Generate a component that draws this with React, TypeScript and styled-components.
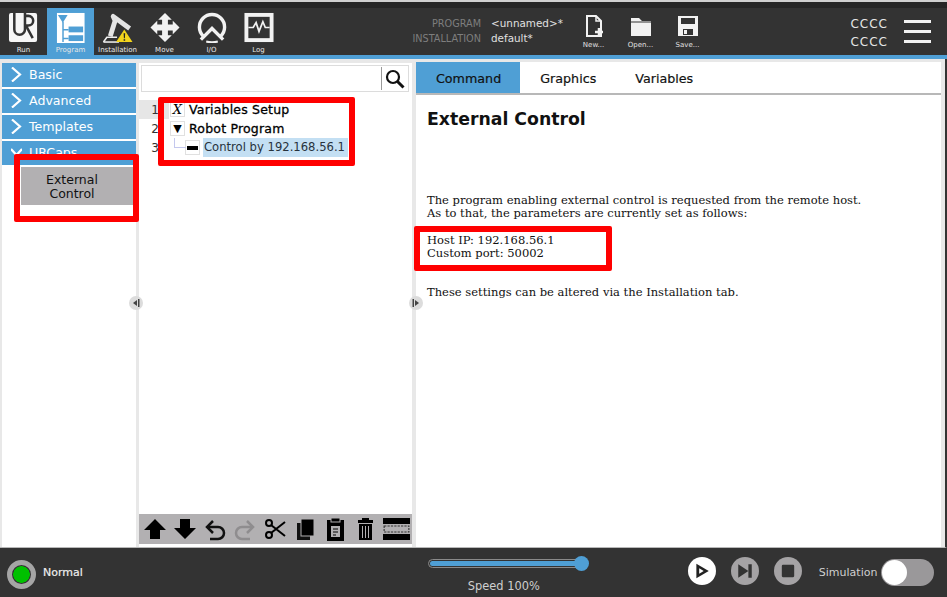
import React from 'react';
import styled, { createGlobalStyle } from 'styled-components';

const GlobalStyle = createGlobalStyle`
    html, body { margin: 0; padding: 0; background: #fff; }
    body { font-family: "DejaVu Sans", sans-serif; }
`;

const Page = styled.div`
    position: relative;
    width: 947px;
    height: 597px;
    overflow: hidden;
    display: flex;
    flex-direction: column;
    background: #e8e8e8;
`;

const TopBar = styled.header`
    height: 55px;
    box-sizing: border-box;
    flex: none;
    display: flex;
    align-items: stretch;
    background: #333333;
    border-top: 2px solid #d0d0d0;
    box-shadow: inset 0 6px 0 #262626;
    padding-top: 6px;
    padding-right: 2px;
`;

const NavItem = styled.div<{ $active?: boolean }>`
    width: 47px;
    display: flex;
    flex-direction: column;
    align-items: center;
    padding-top: 4px;
    box-sizing: border-box;
    background: ${p => (p.$active ? '#4f9fd5' : 'transparent')};
    color: #e6e6e6;
    font-size: 7px;
    svg { display: block; height: 32px; width: 34px; }
    span { margin-top: 3px; line-height: 9px; white-space: nowrap; }
`;

const FileInfo = styled.div`
    margin-left: 130px;
    width: 152px;
    padding-top: 8px;
    display: grid;
    grid-template-columns: 69px 1fr;
    column-gap: 10px;
    grid-auto-rows: 15px;
    line-height: 15px;
`;

const FileLabel = styled.span`
    color: #7e7e7e;
    text-align: right;
    font-size: 9.7px;
`;

const FileValue = styled.span`
    color: #e0e0e0;
    white-space: nowrap;
    font-size: 10.4px;
`;

const FileButtons = styled.div`
    margin-left: 6px;
    display: flex;
`;

const FileButton = styled.div`
    width: 47px;
    display: flex;
    flex-direction: column;
    align-items: center;
    padding-top: 7px;
    color: #e0e0e0;
    font-size: 7px;
    svg { display: block; width: 20px; height: 22px; }
    span { margin-top: 3px; line-height: 10px; }
`;

const Counters = styled.div`
    margin-left: auto;
    margin-right: 16px;
    padding-top: 7px;
    font-size: 12px;
    letter-spacing: 1px;
    line-height: 18px;
    color: #e6e6e6;
`;

const Hamburger = styled.div`
    width: 27px;
    margin-right: 14px;
    padding-top: 12px;
    display: flex;
    flex-direction: column;
    gap: 7px;
    i { display: block; height: 3px; background: #f2f2f2; }
`;

const BlueLine = styled.div`
    height: 4px;
    flex: none;
    background: #4f9fd5;
`;

const Main = styled.main`
    flex: 1;
    min-height: 0;
    display: flex;
    padding: 3px 4px 0 2px;
    border-bottom: 1px solid #b8b8b8;
    border-right: 2px solid #333;
    gap: 3px;
`;

const Sidebar = styled.nav`
    width: 134px;
    flex: none;
    background: #fff;
    margin-top: 1px;
    position: relative;
`;

const Group = styled.div`
    height: 24px;
    box-sizing: border-box;
    padding: 0 0 2px 9px;
    margin-bottom: 2px;
    display: flex;
    align-items: center;
    gap: 7px;
    background: #4f9fd5;
    color: #fff;
    font-size: 12.6px;
    svg { width: 11px; height: 15px; flex: none; }
`;

const SideChild = styled.div`
    margin: 2px 3px 0 19px;
    height: 38px;
    background: #b2b0b2;
    color: #111;
    font-size: 12.5px;
    line-height: 14px;
    text-align: center;
    display: flex;
    align-items: center;
    justify-content: center;
    box-sizing: border-box;
    padding: 2px 10px 0 0;
`;

const TreePanel = styled.section`
    width: 273px;
    flex: none;
    display: flex;
    flex-direction: column;
    background: #fff;
    margin-top: 1px;
    padding-bottom: 3px;
`;

const SearchBox = styled.div`
    height: 27px;
    margin: 2px 3px 0 2px;
    flex: none;
    box-sizing: border-box;
    border: 1px solid #dcdcdc;
    background: #fff;
    display: flex;
    justify-content: flex-end;
    align-items: center;
`;

const SearchButton = styled.div`
    width: 27px;
    height: 23px;
    box-sizing: border-box;
    border-left: 1px solid #999;
    display: flex;
    align-items: center;
    justify-content: center;
    svg { width: 20px; height: 20px; }
`;

const Tree = styled.div`
    flex: 1;
    padding-top: 8px;
`;

const TreeRow = styled.div<{ $current?: boolean }>`
    height: 19px;
    display: flex;
    align-items: center;
    background: ${p => (p.$current ? 'linear-gradient(90deg, #e6e6e6 0 30px, transparent 30px)' : 'transparent')};
`;

const LineNumber = styled.span`
    width: 20px;
    padding-right: 11px;
    text-align: right;
    font-size: 12px;
    color: #333;
    flex: none;
`;

const Toggle = styled.span<{ $indent?: number }>`
    width: 15px;
    height: 15px;
    flex: none;
    margin-left: ${p => p.$indent ?? 0}px;
    box-sizing: border-box;
    border: 1px solid #e0e0e0;
    display: flex;
    align-items: center;
    justify-content: center;
    color: #000;
    font-size: 11px;
    line-height: 1;
`;

const VariableMark = styled.em`
    font-family: "DejaVu Serif", serif;
    font-size: 13px;
    font-style: italic;
`;

const NodeText = styled.span<{ $selected?: boolean }>`
    margin-left: ${p => (p.$selected ? 3 : 4)}px;
    padding: 0 3px 0 ${p => (p.$selected ? 1 : 0)}px;
    font-size: ${p => (p.$selected ? 11.6 : 12.5)}px;
    line-height: 19px;
    letter-spacing: ${p => (p.$selected ? 0 : 0.2)}px;
    -webkit-text-stroke: ${p => (p.$selected ? 0 : 0.3)}px #000;
    white-space: nowrap;
    color: ${p => (p.$selected ? '#27323c' : '#000')};
    background: ${p => (p.$selected ? '#c3dff3' : 'transparent')};
`;

const Branch = styled.span`
    position: absolute;
    left: 174px;
    top: 138px;
    width: 11px;
    height: 9px;
    border-left: 1px solid #c4c8ee;
    border-bottom: 1px solid #c4c8ee;
`;

const TreeToolbar = styled.div`
    height: 30px;
    flex: none;
    background: #b2b0b2;
    display: flex;
    align-items: center;
    justify-content: space-between;
    padding: 0 2px 0 4px;
    svg { display: block; width: 24px; height: 24px; }
    svg:last-child { width: 27px; }
`;

const CommandPanel = styled.section`
    flex: 1;
    display: flex;
    flex-direction: column;
    background: #fff;
    margin-left: 1px;
`;

const Tabs = styled.div`
    height: 31px;
    flex: none;
    display: flex;
    border-bottom: 2px solid #b8b8b8;
`;

const Tab = styled.div<{ $active?: boolean }>`
    padding: 2px 19px 0 20px;
    display: flex;
    align-items: center;
    font-size: 12.7px;
    color: #111;
    background: ${p => (p.$active ? '#4f9fd5' : 'transparent')};
    -webkit-text-stroke: 0.2px #111;
`;

const Content = styled.div`
    padding: 13px 11px;
    font-family: "DejaVu Serif", serif;
    font-size: 11.52px;
    line-height: 13px;
    color: #111;
`;

const Title = styled.h1`
    margin: 0 0 64px;
    font-family: "DejaVu Sans", sans-serif;
    font-size: 17.3px;
    line-height: 22px;
    font-weight: 700;
    color: #111;
`;

const Para = styled.p`
    margin: 0 0 14px;
    white-space: pre-line;
`;

const ParaGap = styled(Para)`
    margin-bottom: 26px;
`;

const Footer = styled.footer`
    height: 49px;
    flex: none;
    display: flex;
    align-items: center;
    background: #333333;
    position: relative;
`;

const StatusLamp = styled.div`
    width: 19px;
    height: 19px;
    margin: 3px 0 0 7px;
    border: 5px solid #a5a5a5;
    border-radius: 50%;
    background: radial-gradient(circle, #00c000 0 8px, #333 8.500px);
    flex: none;
`;

const StatusText = styled.span`
    margin-left: 7px;
    font-size: 11px;
    color: #eee;
    -webkit-text-stroke: 0.2px #eee;
`;

const SpeedControl = styled.div`
    margin-left: 345px;
    width: 160px;
    display: flex;
    flex-direction: column;
    align-items: center;
    gap: 11px;
    margin-top: 6px;
`;

const SpeedTrack = styled.div`
    width: 100%;
    height: 9px;
    box-sizing: border-box;
    border: 1px solid #8a8a8a;
    border-radius: 5px;
    padding: 1px;
    position: relative;
    i {
        display: block;
        height: 100%;
        background: #4f9fd5;
        border-radius: 3px;
    }
    b {
        position: absolute;
        right: -2px;
        top: -4px;
        width: 15px;
        height: 15px;
        border-radius: 50%;
        background: #4f9fd5;
    }
`;

const SpeedLabel = styled.span`
    font-size: 11.4px;
    line-height: 14px;
    color: #cfcfcf;
    margin-right: 8px;
`;

const Transport = styled.div`
    margin-left: 100px;
    margin-top: -4px;
    display: flex;
    gap: 15px;
`;

const RoundButton = styled.div<{ $on?: boolean }>`
    width: 28px;
    height: 28px;
    border-radius: 50%;
    background: ${p => (p.$on ? '#fff' : '#a5a3a5')};
    display: flex;
    align-items: center;
    justify-content: center;
    svg { width: 18px; height: 18px; }
`;

const SimLabel = styled.span`
    margin-left: 17px;
    font-size: 11px;
    color: #cfcfcf;
`;

const Switch = styled.div`
    margin-left: 4px;
    width: 53px;
    height: 27px;
    border-radius: 14px;
    background: #9a989a;
    position: relative;
    &::after {
        content: '';
        position: absolute;
        left: 1px;
        top: 1px;
        width: 25px;
        height: 25px;
        border-radius: 50%;
        background: #fff;
    }
`;

const Handle = styled.span<{ $left: number }>`
    position: absolute;
    left: ${p => p.$left}px;
    top: 296px;
    width: 14px;
    height: 14px;
    border-radius: 50%;
    background: #dcdcdc;
    display: flex;
    align-items: center;
    justify-content: center;
    svg { width: 8px; height: 8px; }
`;

const Highlight = styled.div<{ $x: number; $y: number; $w: number; $h: number }>`
    position: absolute;
    left: ${p => p.$x}px;
    top: ${p => p.$y}px;
    width: ${p => p.$w}px;
    height: ${p => p.$h}px;
    box-sizing: border-box;
    border: 6px solid #ff0000;
    border-radius: 2px;
`;

const LogoIcon = () => (
    <svg viewBox="0 0 34 32">
        <rect x="1.500" y="1" width="29" height="30" rx="2" fill="#f6f6f6" />
        <path d="M7 1v17a5.500 5.500 0 0 0 11 0V1" fill="none" stroke="#333" strokeWidth="2.600" />
        <path d="M18 4h3.500a4.500 4.500 0 0 1 0 10H19l7 13" fill="none" stroke="#333" strokeWidth="2.600" />
    </svg>
);

const ProgramIcon = () => (
    <svg viewBox="0 0 34 32">
        <rect x="2.500" y="1" width="28.500" height="31" fill="#fff" />
        <path d="M3.500 3h10l-5 8z" fill="#4f9fd5" />
        <path d="M8 10h1.500v21H8zM9 17.500h5.500v1.500H9zM9 26.500h5.500v1.500H9z" fill="#4f9fd5" />
        <rect x="14.500" y="15" width="15" height="6" fill="#4f9fd5" />
        <rect x="14.500" y="24" width="15" height="6" fill="#4f9fd5" />
    </svg>
);

const InstallIcon = () => (
    <svg viewBox="0 0 34 32">
        <path d="M29 17L12 4.500 14 9 9 25" fill="none" stroke="#e4e4e4" strokeWidth="5" strokeLinejoin="round" />
        <path d="M2 31l3.500-5H16" fill="none" stroke="#eee" strokeWidth="1.600" />
        <path d="M2 31h16" stroke="#eee" strokeWidth="1.600" />
        <path d="M23.500 18L32 31H15z" fill="#f2d41c" />
        <path d="M22.800 22h1.600l-.3 5h-1zM22.800 28h1.600v1.800h-1.600z" fill="#222" />
    </svg>
);

const MoveIcon = () => (
    <svg viewBox="0 0 34 32">
        <path d="M17 1L24 8H20V13H25V9L32 16L25 23V19H20V24H24L17 31L10 24H14V19H9V23L2 16L9 9V13H14V8H10Z" fill="#f2f2f2" />
    </svg>
);

const IoIcon = () => (
    <svg viewBox="0 0 34 32">
        <path d="M8 25A13 13 0 1 1 26 25" fill="none" stroke="#f2f2f2" strokeWidth="3.500" />
        <path d="M5.500 28.500L17 17L28.500 28.500" fill="none" stroke="#f2f2f2" strokeWidth="3.500" />
        <path d="M11 30.500q6 1.500 12 0" fill="none" stroke="#f2f2f2" strokeWidth="2.200" />
    </svg>
);

const LogIcon = () => (
    <svg viewBox="0 0 34 32">
        <rect x="4" y="3" width="26" height="26" fill="none" stroke="#f2f2f2" strokeWidth="4" />
        <path d="M6 16h5l3-5 3 9 4-10 2.500 6H28" fill="none" stroke="#f2f2f2" strokeWidth="1.800" />
    </svg>
);

const Chevron = () => (
    <svg viewBox="0 0 11 15">
        <path d="M1 .5l8 7-8 7" fill="none" stroke="#fff" strokeWidth="2.200" />
    </svg>
);

const ChevronDown = () => (
    <svg viewBox="0 0 11 15">
        <path d="M0 4l5.500 6 5.500-6" fill="none" stroke="#fff" strokeWidth="2.200" />
    </svg>
);

const toolIcons = [
    <path key="up" d="M12 2L23 13h-6v9H7v-9H1z" fill="#000" />,
    <path key="down" d="M12 22L23 11h-6V2H7v9H1z" fill="#000" />,
    <g key="undo" fill="none" stroke="#111" strokeWidth="2.500">
        <path d="M5 10h10a6 6 0 0 1 0 12H7" />
        <path d="M10 4L4 10l6 6" />
    </g>,
    <g key="redo" fill="none" stroke="#8f8d8f" strokeWidth="2.500">
        <path d="M19 10H9a6 6 0 0 0 0 12h8" />
        <path d="M14 4l6 6-6 6" />
    </g>,
    <g key="cut" fill="none" stroke="#000" strokeWidth="2">
        <circle cx="6" cy="6" r="3" />
        <circle cx="6" cy="18" r="3" />
        <path d="M8 8l14 11M8 16L22 5" />
    </g>,
    <g key="copy">
        <rect x="4" y="6" width="13" height="17" fill="#111" />
        <rect x="8" y="2" width="13" height="17" fill="#000" stroke="#b2b0b2" strokeWidth="1" />
    </g>,
    <g key="paste">
        <rect x="4" y="3" width="17" height="21" fill="#000" />
        <rect x="8" y="1" width="9" height="4" fill="#000" stroke="#b2b0b2" strokeWidth="1" />
        <rect x="8" y="9" width="9" height="11" fill="#b2b0b2" />
        <path d="M10 12h5M10 15h5M10 18h3" stroke="#000" strokeWidth="1" />
    </g>,
    <g key="trash">
        <rect x="5" y="3" width="15" height="3" fill="#000" />
        <rect x="9" y="1" width="7" height="2" fill="#000" />
        <path d="M6 7h13v16H6z" fill="#000" />
        <path d="M9.500 9v12M12.500 9v12M15.500 9v12" stroke="#b2b0b2" strokeWidth="1" />
    </g>,
];

const App = () => (
    <Page>
        <GlobalStyle />
        <TopBar>
            <NavItem><LogoIcon /><span>Run</span></NavItem>
            <NavItem $active><ProgramIcon /><span>Program</span></NavItem>
            <NavItem><InstallIcon /><span>Installation</span></NavItem>
            <NavItem><MoveIcon /><span>Move</span></NavItem>
            <NavItem><IoIcon /><span>I/O</span></NavItem>
            <NavItem><LogIcon /><span>Log</span></NavItem>
            <FileInfo>
                <FileLabel>PROGRAM</FileLabel>
                <FileValue>&lt;unnamed&gt;*</FileValue>
                <FileLabel>INSTALLATION</FileLabel>
                <FileValue>default*</FileValue>
            </FileInfo>
            <FileButtons>
                <FileButton>
                    <svg viewBox="0 0 20 22">
                        <path d="M3 1h9l5 5v15H3z" fill="none" stroke="#f2f2f2" strokeWidth="2" />
                        <path d="M12 1v5h5" fill="none" stroke="#f2f2f2" strokeWidth="1.500" />
                        <path d="M11 17h8M15 13v8" stroke="#f2f2f2" strokeWidth="2.500" />
                    </svg>
                    <span>New...</span>
                </FileButton>
                <FileButton>
                    <svg viewBox="0 0 20 22">
                        <path d="M0 3h8l3 3h9v15H0z" fill="#f2f2f2" />
                        <path d="M0 7h20" stroke="#333" strokeWidth="1" />
                    </svg>
                    <span>Open...</span>
                </FileButton>
                <FileButton>
                    <svg viewBox="0 0 20 22">
                        <path d="M0 1h20v20H0z" fill="#f2f2f2" />
                        <rect x="3" y="3" width="14" height="6" fill="#333" />
                        <rect x="5" y="14" width="10" height="6" fill="#333" />
                        <rect x="6" y="15" width="3" height="4" fill="#f2f2f2" />
                    </svg>
                    <span>Save...</span>
                </FileButton>
            </FileButtons>
            <Counters>CCCC<br />CCCC</Counters>
            <Hamburger><i /><i /><i /></Hamburger>
        </TopBar>
        <BlueLine />
        <Main>
            <Sidebar>
                <Group><Chevron />Basic</Group>
                <Group><Chevron />Advanced</Group>
                <Group><Chevron />Templates</Group>
                <Group><ChevronDown />URCaps</Group>
                <SideChild>External<br />Control</SideChild>
            </Sidebar>
            <TreePanel>
                <SearchBox>
                    <SearchButton>
                        <svg viewBox="0 0 20 20">
                            <circle cx="8" cy="8" r="6" fill="none" stroke="#111" strokeWidth="2.200" />
                            <path d="M12.500 12.500L18.500 18.500" stroke="#111" strokeWidth="3" />
                        </svg>
                    </SearchButton>
                </SearchBox>
                <Tree>
                    <TreeRow $current>
                        <LineNumber>1</LineNumber>
                        <Toggle><VariableMark>X</VariableMark></Toggle>
                        <NodeText>Variables Setup</NodeText>
                    </TreeRow>
                    <TreeRow>
                        <LineNumber>2</LineNumber>
                        <Toggle>▼</Toggle>
                        <NodeText>Robot Program</NodeText>
                    </TreeRow>
                    <TreeRow>
                        <LineNumber>3</LineNumber>
                        <Toggle $indent={15}>
                            <svg width="11" height="4" viewBox="0 0 11 4"><rect x="0" y="0" width="11" height="4" fill="#000" /></svg>
                        </Toggle>
                        <NodeText $selected>Control by 192.168.56.1</NodeText>
                    </TreeRow>
                </Tree>
                <TreeToolbar>
                    {toolIcons.map(icon => (
                        <svg viewBox="0 0 24 24" key={icon.key}>{icon}</svg>
                    ))}
                    <svg viewBox="0 0 24 24" preserveAspectRatio="none">
                        <rect x="0" y="1" width="24" height="6" fill="#000" />
                        <rect x="1" y="9" width="22" height="6" fill="none" stroke="#333" strokeDasharray="2 1" />
                        <rect x="0" y="17" width="24" height="6" fill="#000" />
                    </svg>
                </TreeToolbar>
            </TreePanel>
            <CommandPanel>
                <Tabs>
                    <Tab $active>Command</Tab>
                    <Tab>Graphics</Tab>
                    <Tab>Variables</Tab>
                </Tabs>
                <Content>
                    <Title>External Control</Title>
                    <Para>{'The program enabling external control is requested from the remote host.\nAs to that, the parameters are currently set as follows:'}</Para>
                    <ParaGap>{'Host IP: 192.168.56.1\nCustom port: 50002'}</ParaGap>
                    <Para>These settings can be altered via the Installation tab.</Para>
                </Content>
            </CommandPanel>
        </Main>
        <Footer>
            <StatusLamp />
            <StatusText>Normal</StatusText>
            <SpeedControl>
                <SpeedTrack><i /><b /></SpeedTrack>
                <SpeedLabel>Speed 100%</SpeedLabel>
            </SpeedControl>
            <Transport>
                <RoundButton $on>
                    <svg viewBox="0 0 16 16"><path d="M3 1.500L14 8 3 14.500z" fill="#222" /><path d="M5.500 5.500L9.500 8l-4 2.500z" fill="#fff" /></svg>
                </RoundButton>
                <RoundButton>
                    <svg viewBox="0 0 16 16"><path d="M2 2l9 6-9 6z" fill="#333" /><rect x="11" y="2" width="3" height="12" fill="#333" /></svg>
                </RoundButton>
                <RoundButton>
                    <svg viewBox="0 0 16 16"><rect x="2.500" y="2.500" width="11" height="11" rx="1" fill="#333" /></svg>
                </RoundButton>
            </Transport>
            <SimLabel>Simulation</SimLabel>
            <Switch />
        </Footer>
        <Branch />
        <Handle $left={129}>
            <svg viewBox="0 0 8 8"><path d="M5 1L1 4l4 3z" fill="#444" /><rect x="6" y="0" width="1.500" height="8" fill="#444" /></svg>
        </Handle>
        <Handle $left={409}>
            <svg viewBox="0 0 8 8"><rect x="0.500" y="0" width="1.500" height="8" fill="#444" /><path d="M3 1l4 3-4 3z" fill="#444" /></svg>
        </Handle>
        <Highlight $x={14} $y={154} $w={125} $h={68} />
        <Highlight $x={158} $y={97} $w={197} $h={69} />
        <Highlight $x={414} $y={226} $w={198} $h={45} />
    </Page>
);

export default App;
